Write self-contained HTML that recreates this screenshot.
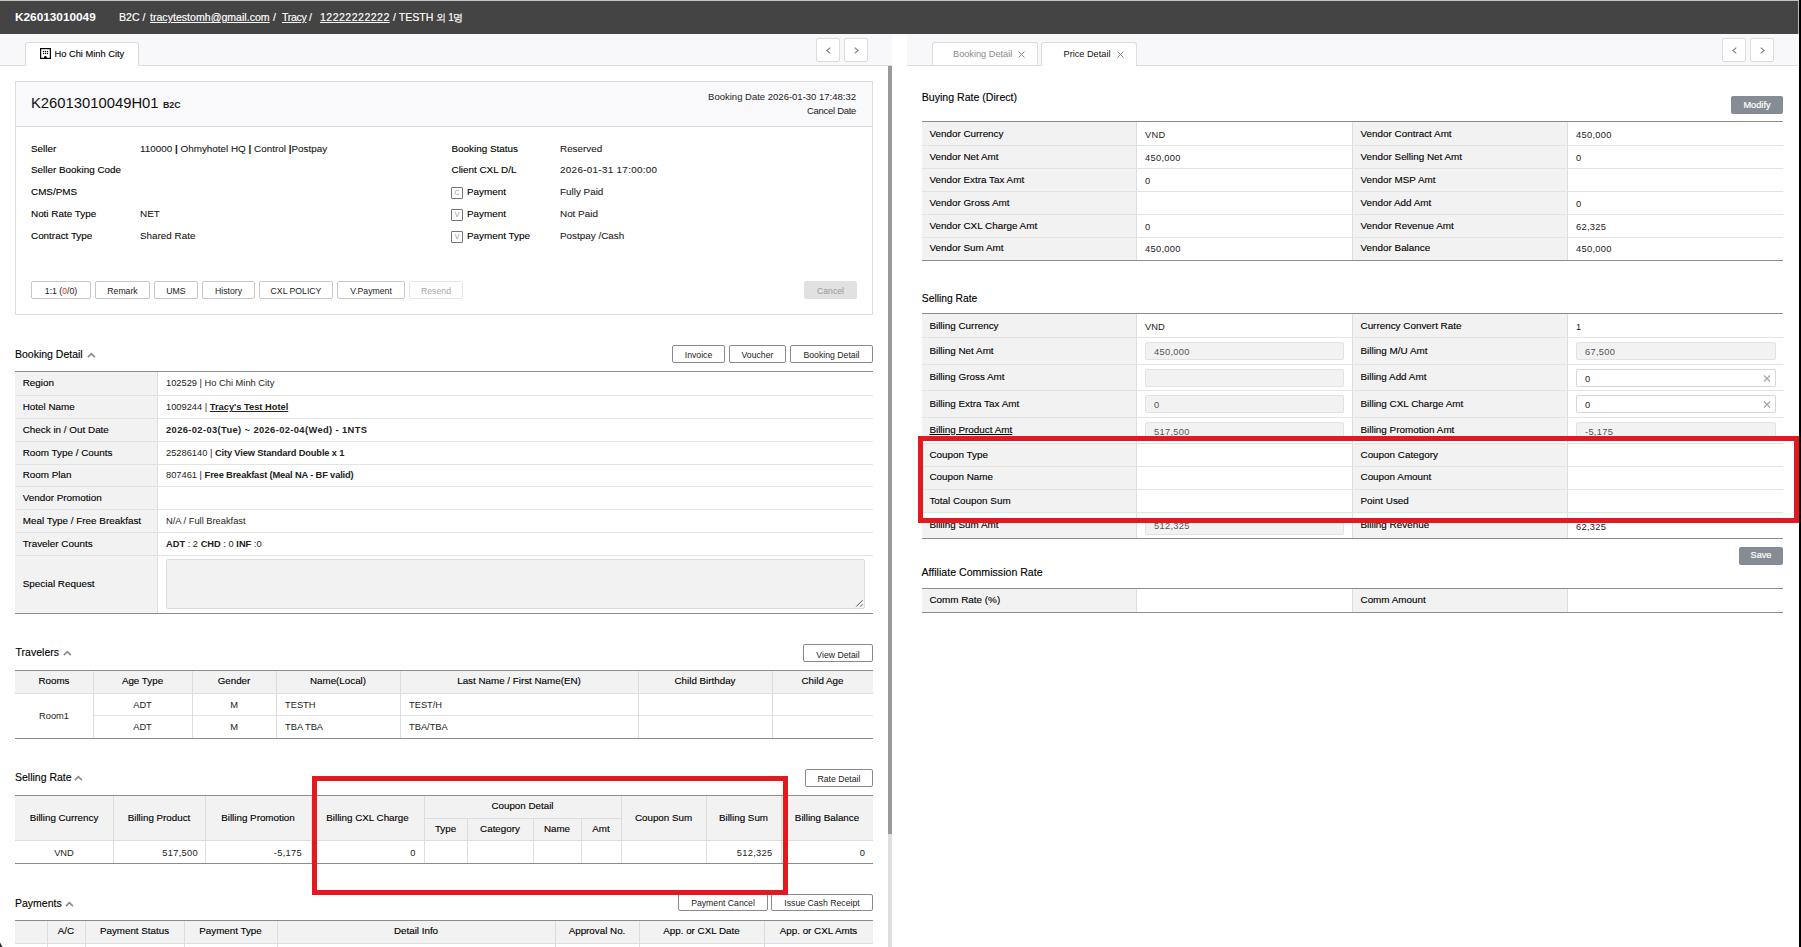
<!DOCTYPE html>
<html><head><meta charset="utf-8"><title>Booking</title>
<style>
html,body{margin:0;padding:0;}
body{width:1801px;height:947px;overflow:hidden;position:relative;background:#fff;font-family:"Liberation Sans",sans-serif;}
body>div,body>span{position:absolute;}
span{white-space:nowrap;}
</style></head><body>
<div style="left:0px;top:0px;width:1801px;height:947px;background:#fff"></div>
<div style="left:0px;top:0px;width:1798px;height:1px;background:#c4c4c4"></div>
<div style="left:0px;top:1px;width:1798px;height:33px;background:#444444"></div>
<span style="left:15px;top:12px;font-size:11.8px;line-height:11.8px;font-weight:700;color:#fff;">K26013010049</span>
<span style="left:119px;top:12px;font-size:10.6px;line-height:10.6px;color:#fff;-webkit-text-stroke:0.15px #fff;">B2C /</span>
<span style="left:150px;top:12px;font-size:10.6px;line-height:10.6px;color:#fff;-webkit-text-stroke:0.15px #fff;text-decoration:underline">tracytestomh@gmail.com</span>
<span style="left:273px;top:12px;font-size:10.6px;line-height:10.6px;color:#fff;-webkit-text-stroke:0.15px #fff;">/</span>
<span style="left:282px;top:12px;font-size:10.6px;line-height:10.6px;color:#fff;-webkit-text-stroke:0.15px #fff;text-decoration:underline;letter-spacing:-0.3px">Tracy</span>
<span style="left:309px;top:12px;font-size:10.6px;line-height:10.6px;color:#fff;-webkit-text-stroke:0.15px #fff;">/</span>
<span style="left:320px;top:12px;font-size:10.6px;line-height:10.6px;color:#fff;-webkit-text-stroke:0.15px #fff;text-decoration:underline;letter-spacing:0.45px">12222222222</span>
<span style="left:393px;top:12px;font-size:10.6px;line-height:10.6px;color:#fff;-webkit-text-stroke:0.15px #fff;">/ TESTH <span style='font-size:10px;letter-spacing:-0.5px'>외 1명</span></span>
<div style="left:1798px;top:0px;width:1px;height:34px;background:#bbbbbb"></div>
<div style="left:1799px;top:0px;width:2px;height:947px;background:#000"></div>
<svg style="position:absolute;left:0;top:942px" width="4" height="5" viewBox="0 0 4 5"><path d="M0 0.5 L2.6 5 L0 5 Z" fill="#333"/></svg>
<div style="left:0px;top:34px;width:892px;height:31px;background:#f8f7fa"></div>
<div style="left:0px;top:65px;width:892px;height:1px;background:#dcdcdc"></div>
<div style="left:25px;top:42px;width:114px;height:24px;background:#fff;border:1px solid #dcdcdc;border-bottom:none;border-radius:3px 3px 0 0;box-sizing:border-box"></div>
<svg style="position:absolute;left:40px;top:48px" width="11" height="11" viewBox="0 0 11 11"><rect x="0.6" y="0.6" width="9.8" height="9.8" fill="#fff" stroke="#000" stroke-width="1.2"/><g fill="#000"><circle cx="3.5" cy="3.5" r="0.7"/><circle cx="5.5" cy="3.5" r="0.7"/><circle cx="7.5" cy="3.5" r="0.7"/><circle cx="3.5" cy="5.5" r="0.7"/><circle cx="5.5" cy="5.5" r="0.7"/><circle cx="7.5" cy="5.5" r="0.7"/><path d="M4.1 10.5 V9.2 A1.3 1.3 0 0 1 6.7 9.2 V10.5 Z"/></g></svg>
<span style="left:54.5px;top:50px;font-size:9.3px;line-height:9.3px;color:#000;-webkit-text-stroke:0.1px #000;">Ho Chi Minh City</span>
<div style="left:816px;top:38px;width:24px;height:24px;background:#fff;border:1px solid #dcdcdc;border-radius:2px;box-sizing:border-box"></div>
<svg style="position:absolute;left:826px;top:46.5px" width="5" height="7" viewBox="0 0 5 7"><polyline points="4.3,0.6 0.8,3.5 4.3,6.4" fill="none" stroke="#7a7a7a" stroke-width="1.1"/></svg>
<div style="left:844px;top:38px;width:24px;height:24px;background:#fff;border:1px solid #dcdcdc;border-radius:2px;box-sizing:border-box"></div>
<svg style="position:absolute;left:854px;top:46.5px" width="5" height="7" viewBox="0 0 5 7"><polyline points="0.7,0.6 4.2,3.5 0.7,6.4" fill="none" stroke="#7a7a7a" stroke-width="1.1"/></svg>
<div style="left:888px;top:66px;width:4px;height:768px;background:#9a9a9a"></div>
<div style="left:888px;top:834px;width:4px;height:113px;background:#dedede"></div>
<div style="left:907px;top:34px;width:891px;height:31px;background:#f8f7fa"></div>
<div style="left:907px;top:65px;width:891px;height:1px;background:#dcdcdc"></div>
<div style="left:932px;top:42px;width:106px;height:24px;background:#fff;border:1px solid #dcdcdc;border-bottom:none;border-radius:3px 3px 0 0;box-sizing:border-box"></div>
<div style="left:932px;top:65px;width:106px;height:1px;background:#dcdcdc"></div>
<span style="left:953px;top:50px;font-size:9.2px;line-height:9.2px;color:#8a8a8a;">Booking Detail</span>
<svg style="position:absolute;left:1018px;top:51px" width="7" height="7" viewBox="0 0 7 7"><path d="M0.5 0.5 L6.5 6.5 M6.5 0.5 L0.5 6.5" stroke="#888" stroke-width="1"/></svg>
<div style="left:1041px;top:42px;width:96px;height:24px;background:#fff;border:1px solid #dcdcdc;border-bottom:none;border-radius:3px 3px 0 0;box-sizing:border-box"></div>
<span style="left:1063.5px;top:50px;font-size:9.2px;line-height:9.2px;color:#111;">Price Detail</span>
<svg style="position:absolute;left:1117px;top:51px" width="7" height="7" viewBox="0 0 7 7"><path d="M0.5 0.5 L6.5 6.5 M6.5 0.5 L0.5 6.5" stroke="#888" stroke-width="1"/></svg>
<div style="left:1722px;top:38px;width:24px;height:24px;background:#fff;border:1px solid #dcdcdc;border-radius:2px;box-sizing:border-box"></div>
<svg style="position:absolute;left:1732px;top:46.5px" width="5" height="7" viewBox="0 0 5 7"><polyline points="4.3,0.6 0.8,3.5 4.3,6.4" fill="none" stroke="#7a7a7a" stroke-width="1.1"/></svg>
<div style="left:1750px;top:38px;width:24px;height:24px;background:#fff;border:1px solid #dcdcdc;border-radius:2px;box-sizing:border-box"></div>
<svg style="position:absolute;left:1760px;top:46.5px" width="5" height="7" viewBox="0 0 5 7"><polyline points="0.7,0.6 4.2,3.5 0.7,6.4" fill="none" stroke="#7a7a7a" stroke-width="1.1"/></svg>
<div style="left:15px;top:81px;width:858px;height:234px;background:#fff;border:1px solid #dedede;box-sizing:border-box"></div>
<div style="left:16px;top:82px;width:856px;height:44px;background:#f9f8fa"></div>
<div style="left:16px;top:126px;width:856px;height:1px;background:#dedede"></div>
<span style="left:31px;top:96px;font-size:14.8px;line-height:14.8px;color:#111;">K26013010049H01</span>
<span style="left:163px;top:101px;font-size:8.8px;line-height:8.8px;font-weight:700;color:#222;">B2C</span>
<span style="left:256px;width:600px;text-align:right;top:92px;font-size:9.5px;line-height:9.5px;color:#222;">Booking Date 2026-01-30 17:48:32</span>
<span style="left:256px;width:600px;text-align:right;top:106px;font-size:9.5px;line-height:9.5px;color:#222;letter-spacing:-0.3px">Cancel Date</span>
<span style="left:31px;top:144px;font-size:9.9px;line-height:9.9px;color:#000;-webkit-text-stroke:0.12px #000;">Seller</span>
<span style="left:31px;top:165px;font-size:9.9px;line-height:9.9px;color:#000;-webkit-text-stroke:0.12px #000;">Seller Booking Code</span>
<span style="left:31px;top:187px;font-size:9.9px;line-height:9.9px;color:#000;-webkit-text-stroke:0.12px #000;">CMS/PMS</span>
<span style="left:31px;top:209px;font-size:9.9px;line-height:9.9px;color:#000;-webkit-text-stroke:0.12px #000;">Noti Rate Type</span>
<span style="left:31px;top:231px;font-size:9.9px;line-height:9.9px;color:#000;-webkit-text-stroke:0.12px #000;">Contract Type</span>
<span style="left:140px;top:144px;font-size:9.9px;line-height:9.9px;color:#141414;-webkit-text-stroke:0.08px #141414;">110000 <b>|</b> Ohmyhotel HQ <b>|</b> Control <b>|</b>Postpay</span>
<span style="left:140px;top:209px;font-size:9.9px;line-height:9.9px;color:#141414;-webkit-text-stroke:0.08px #141414;">NET</span>
<span style="left:140px;top:231px;font-size:9.9px;line-height:9.9px;color:#141414;-webkit-text-stroke:0.08px #141414;">Shared Rate</span>
<span style="left:451.5px;top:144px;font-size:9.9px;line-height:9.9px;color:#000;-webkit-text-stroke:0.12px #000;">Booking Status</span>
<span style="left:451.5px;top:165px;font-size:9.9px;line-height:9.9px;color:#000;-webkit-text-stroke:0.12px #000;">Client CXL D/L</span>
<div style="left:451px;top:187px;width:12px;height:12px;background:#fff;border:1px solid #777;border-radius:1px;box-sizing:border-box"></div>
<span style="left:157px;width:600px;text-align:center;top:189px;font-size:7px;line-height:7px;color:#999;">C</span>
<span style="left:467px;top:187px;font-size:9.9px;line-height:9.9px;color:#000;-webkit-text-stroke:0.12px #000;">Payment</span>
<div style="left:451px;top:209px;width:12px;height:12px;background:#fff;border:1px solid #777;border-radius:1px;box-sizing:border-box"></div>
<span style="left:157px;width:600px;text-align:center;top:211px;font-size:7px;line-height:7px;color:#999;">V</span>
<span style="left:467px;top:209px;font-size:9.9px;line-height:9.9px;color:#000;-webkit-text-stroke:0.12px #000;">Payment</span>
<div style="left:451px;top:231px;width:12px;height:12px;background:#fff;border:1px solid #777;border-radius:1px;box-sizing:border-box"></div>
<span style="left:157px;width:600px;text-align:center;top:233px;font-size:7px;line-height:7px;color:#999;">V</span>
<span style="left:467px;top:231px;font-size:9.9px;line-height:9.9px;color:#000;-webkit-text-stroke:0.12px #000;">Payment Type</span>
<span style="left:560px;top:144px;font-size:9.9px;line-height:9.9px;color:#1e1e1e;-webkit-text-stroke:0.1px #1e1e1e;">Reserved</span>
<span style="left:560px;top:165px;font-size:9.9px;line-height:9.9px;color:#1e1e1e;-webkit-text-stroke:0.1px #1e1e1e;letter-spacing:0.3px;">2026-01-31 17:00:00</span>
<span style="left:560px;top:187px;font-size:9.9px;line-height:9.9px;color:#1e1e1e;-webkit-text-stroke:0.1px #1e1e1e;">Fully Paid</span>
<span style="left:560px;top:209px;font-size:9.9px;line-height:9.9px;color:#1e1e1e;-webkit-text-stroke:0.1px #1e1e1e;">Not Paid</span>
<span style="left:560px;top:231px;font-size:9.9px;line-height:9.9px;color:#1e1e1e;-webkit-text-stroke:0.1px #1e1e1e;">Postpay /Cash</span>
<div style="left:31px;top:281px;width:60px;height:18px;background:#fff;border:1px solid #c8c8c8;border-radius:2px;box-sizing:border-box"></div>
<span style="left:-239.0px;width:600px;text-align:center;top:287px;font-size:8.7px;line-height:8.7px;color:#222;">1:1 (<span style="color:#e33">0</span>/0)</span>
<div style="left:95px;top:281px;width:55px;height:18px;background:#fff;border:1px solid #c8c8c8;border-radius:2px;box-sizing:border-box"></div>
<span style="left:-177.5px;width:600px;text-align:center;top:287px;font-size:8.7px;line-height:8.7px;color:#222;">Remark</span>
<div style="left:154px;top:281px;width:44px;height:18px;background:#fff;border:1px solid #c8c8c8;border-radius:2px;box-sizing:border-box"></div>
<span style="left:-124.0px;width:600px;text-align:center;top:287px;font-size:8.7px;line-height:8.7px;color:#222;">UMS</span>
<div style="left:202px;top:281px;width:53px;height:18px;background:#fff;border:1px solid #c8c8c8;border-radius:2px;box-sizing:border-box"></div>
<span style="left:-71.5px;width:600px;text-align:center;top:287px;font-size:8.7px;line-height:8.7px;color:#222;">History</span>
<div style="left:259px;top:281px;width:74px;height:18px;background:#fff;border:1px solid #c8c8c8;border-radius:2px;box-sizing:border-box"></div>
<span style="left:-4.0px;width:600px;text-align:center;top:287px;font-size:8.7px;line-height:8.7px;color:#222;">CXL POLICY</span>
<div style="left:337px;top:281px;width:68px;height:18px;background:#fff;border:1px solid #c8c8c8;border-radius:2px;box-sizing:border-box"></div>
<span style="left:71.0px;width:600px;text-align:center;top:287px;font-size:8.7px;line-height:8.7px;color:#222;">V.Payment</span>
<div style="left:409px;top:281px;width:54px;height:18px;background:#fff;border:1px solid #e6e6e6;border-radius:2px;box-sizing:border-box"></div>
<span style="left:136.0px;width:600px;text-align:center;top:287px;font-size:8.7px;line-height:8.7px;color:#a5a5a5;">Resend</span>
<div style="left:804px;top:281px;width:53px;height:18px;background:#e1e1e1;border-radius:2px"></div>
<span style="left:530.5px;width:600px;text-align:center;top:287px;font-size:8.7px;line-height:8.7px;color:#9a9a9a;">Cancel</span>
<span style="left:15px;top:349px;font-size:10.5px;line-height:10.5px;color:#000;-webkit-text-stroke:0.12px #000;">Booking Detail</span>
<svg style="position:absolute;left:86.5px;top:351.5px" width="9" height="6" viewBox="0 0 9 6"><polyline points="0.9,5.1 4.4,1.6 7.9,5.1" fill="none" stroke="#8a8a8a" stroke-width="1.6"/></svg>
<div style="left:672px;top:345px;width:53px;height:18px;background:#fff;border:1px solid #8a8a8a;border-radius:2px;box-sizing:border-box"></div>
<span style="left:398.5px;width:600px;text-align:center;top:351px;font-size:8.7px;line-height:8.7px;color:#222;">Invoice</span>
<div style="left:729px;top:345px;width:57px;height:18px;background:#fff;border:1px solid #8a8a8a;border-radius:2px;box-sizing:border-box"></div>
<span style="left:457.5px;width:600px;text-align:center;top:351px;font-size:8.7px;line-height:8.7px;color:#222;">Voucher</span>
<div style="left:790px;top:345px;width:83px;height:18px;background:#fff;border:1px solid #8a8a8a;border-radius:2px;box-sizing:border-box"></div>
<span style="left:531.5px;width:600px;text-align:center;top:351px;font-size:8.7px;line-height:8.7px;color:#222;">Booking Detail</span>
<div style="left:15px;top:372px;width:142px;height:241px;background:#f2f2f2"></div>
<div style="left:157px;top:372px;width:1px;height:241px;background:#dddddd"></div>
<div style="left:15px;top:395px;width:858px;height:1px;background:#e3e3e3"></div>
<div style="left:15px;top:418px;width:858px;height:1px;background:#e3e3e3"></div>
<div style="left:15px;top:441px;width:858px;height:1px;background:#e3e3e3"></div>
<div style="left:15px;top:464px;width:858px;height:1px;background:#e3e3e3"></div>
<div style="left:15px;top:486px;width:858px;height:1px;background:#e3e3e3"></div>
<div style="left:15px;top:509px;width:858px;height:1px;background:#e3e3e3"></div>
<div style="left:15px;top:532px;width:858px;height:1px;background:#e3e3e3"></div>
<div style="left:15px;top:555px;width:858px;height:1px;background:#e3e3e3"></div>
<div style="left:15px;top:371px;width:858px;height:1px;background:#8c8c8c"></div>
<div style="left:15px;top:613px;width:858px;height:1px;background:#8c8c8c"></div>
<span style="left:22.7px;top:378px;font-size:9.9px;line-height:9.9px;color:#000;-webkit-text-stroke:0.12px #000;">Region</span>
<span style="left:22.7px;top:402px;font-size:9.9px;line-height:9.9px;color:#000;-webkit-text-stroke:0.12px #000;">Hotel Name</span>
<span style="left:22.7px;top:425px;font-size:9.9px;line-height:9.9px;color:#000;-webkit-text-stroke:0.12px #000;">Check in / Out Date</span>
<span style="left:22.7px;top:448px;font-size:9.9px;line-height:9.9px;color:#000;-webkit-text-stroke:0.12px #000;">Room Type / Counts</span>
<span style="left:22.7px;top:470px;font-size:9.9px;line-height:9.9px;color:#000;-webkit-text-stroke:0.12px #000;">Room Plan</span>
<span style="left:22.7px;top:493px;font-size:9.9px;line-height:9.9px;color:#000;-webkit-text-stroke:0.12px #000;">Vendor Promotion</span>
<span style="left:22.7px;top:516px;font-size:9.9px;line-height:9.9px;color:#000;-webkit-text-stroke:0.12px #000;">Meal Type / Free Breakfast</span>
<span style="left:22.7px;top:539px;font-size:9.9px;line-height:9.9px;color:#000;-webkit-text-stroke:0.12px #000;">Traveler Counts</span>
<span style="left:22.7px;top:579px;font-size:9.9px;line-height:9.9px;color:#000;-webkit-text-stroke:0.12px #000;">Special Request</span>
<span style="left:166px;top:379px;font-size:9.3px;line-height:9.3px;color:#222;">102529 | Ho Chi Minh City</span>
<span style="left:166px;top:403px;font-size:9.3px;line-height:9.3px;color:#222;">1009244 | <b style="text-decoration:underline">Tracy's Test Hotel</b></span>
<span style="left:166px;top:426px;font-size:9.3px;line-height:9.3px;color:#222;"><b style="letter-spacing:0.4px">2026-02-03(Tue) ~ 2026-02-04(Wed) - 1NTS</b></span>
<span style="left:166px;top:449px;font-size:9.3px;line-height:9.3px;color:#222;">25286140 | <b style="letter-spacing:-0.15px">City View Standard Double x 1</b></span>
<span style="left:166px;top:471px;font-size:9.3px;line-height:9.3px;color:#222;">807461 | <b style="letter-spacing:-0.15px">Free Breakfast (Meal NA - BF valid)</b></span>
<span style="left:166px;top:517px;font-size:9.3px;line-height:9.3px;color:#222;">N/A / Full Breakfast</span>
<span style="left:166px;top:540px;font-size:9.3px;line-height:9.3px;color:#222;"><b>ADT</b> : 2 <b>CHD</b> : 0 <b>INF</b> :0</span>
<div style="left:166px;top:559px;width:699px;height:50px;background:#f2f2f2;border:1px solid #dcdcdc;border-radius:2px;box-sizing:border-box"></div>
<svg style="position:absolute;left:855px;top:599px" width="9" height="9" viewBox="0 0 9 9"><path d="M1.2 7.6 L7.6 1.2 M5.2 7.6 L7.6 5.2" stroke="#555" stroke-width="1"/></svg>
<span style="left:15.6px;top:647px;font-size:10.5px;line-height:10.5px;color:#000;-webkit-text-stroke:0.12px #000;">Travelers</span>
<svg style="position:absolute;left:63px;top:649.5px" width="9" height="6" viewBox="0 0 9 6"><polyline points="0.9,5.1 4.4,1.6 7.9,5.1" fill="none" stroke="#8a8a8a" stroke-width="1.6"/></svg>
<div style="left:803px;top:644px;width:70px;height:18px;background:#fff;border:1px solid #8a8a8a;border-radius:2px;box-sizing:border-box"></div>
<span style="left:538.0px;width:600px;text-align:center;top:651px;font-size:8.7px;line-height:8.7px;color:#222;">View Detail</span>
<div style="left:15px;top:671px;width:858px;height:22px;background:#f2f2f2"></div>
<div style="left:15px;top:670px;width:858px;height:1px;background:#8c8c8c"></div>
<div style="left:15px;top:693px;width:858px;height:1px;background:#dddddd"></div>
<div style="left:93px;top:715px;width:780px;height:1px;background:#e3e3e3"></div>
<div style="left:15px;top:738px;width:858px;height:1px;background:#8c8c8c"></div>
<div style="left:93px;top:671px;width:1px;height:67px;background:#dddddd"></div>
<div style="left:192px;top:671px;width:1px;height:67px;background:#dddddd"></div>
<div style="left:276px;top:671px;width:1px;height:67px;background:#dddddd"></div>
<div style="left:400px;top:671px;width:1px;height:67px;background:#dddddd"></div>
<div style="left:638px;top:671px;width:1px;height:67px;background:#dddddd"></div>
<div style="left:772px;top:671px;width:1px;height:67px;background:#dddddd"></div>
<span style="left:-246.0px;width:600px;text-align:center;top:676px;font-size:9.8px;line-height:9.8px;color:#000;-webkit-text-stroke:0.12px #000;">Rooms</span>
<span style="left:-157.5px;width:600px;text-align:center;top:676px;font-size:9.8px;line-height:9.8px;color:#000;-webkit-text-stroke:0.12px #000;">Age Type</span>
<span style="left:-66.0px;width:600px;text-align:center;top:676px;font-size:9.8px;line-height:9.8px;color:#000;-webkit-text-stroke:0.12px #000;">Gender</span>
<span style="left:38.0px;width:600px;text-align:center;top:676px;font-size:9.8px;line-height:9.8px;color:#000;-webkit-text-stroke:0.12px #000;">Name(Local)</span>
<span style="left:219.0px;width:600px;text-align:center;top:676px;font-size:9.8px;line-height:9.8px;color:#000;-webkit-text-stroke:0.12px #000;">Last Name / First Name(EN)</span>
<span style="left:405.0px;width:600px;text-align:center;top:676px;font-size:9.8px;line-height:9.8px;color:#000;-webkit-text-stroke:0.12px #000;">Child Birthday</span>
<span style="left:522.5px;width:600px;text-align:center;top:676px;font-size:9.8px;line-height:9.8px;color:#000;-webkit-text-stroke:0.12px #000;">Child Age</span>
<span style="left:-246px;width:600px;text-align:center;top:712px;font-size:9.3px;line-height:9.3px;color:#222;">Room1</span>
<span style="left:-157.5px;width:600px;text-align:center;top:701px;font-size:9.3px;line-height:9.3px;color:#222;">ADT</span>
<span style="left:-66px;width:600px;text-align:center;top:701px;font-size:9.3px;line-height:9.3px;color:#222;">M</span>
<span style="left:285px;top:701px;font-size:9.3px;line-height:9.3px;color:#222;">TESTH</span>
<span style="left:409px;top:701px;font-size:9.3px;line-height:9.3px;color:#222;">TEST/H</span>
<span style="left:-157.5px;width:600px;text-align:center;top:723px;font-size:9.3px;line-height:9.3px;color:#222;">ADT</span>
<span style="left:-66px;width:600px;text-align:center;top:723px;font-size:9.3px;line-height:9.3px;color:#222;">M</span>
<span style="left:285px;top:723px;font-size:9.3px;line-height:9.3px;color:#222;">TBA TBA</span>
<span style="left:409px;top:723px;font-size:9.3px;line-height:9.3px;color:#222;">TBA/TBA</span>
<span style="left:15px;top:772px;font-size:10.5px;line-height:10.5px;color:#000;-webkit-text-stroke:0.12px #000;">Selling Rate</span>
<svg style="position:absolute;left:73.5px;top:774.5px" width="9" height="6" viewBox="0 0 9 6"><polyline points="0.9,5.1 4.4,1.6 7.9,5.1" fill="none" stroke="#8a8a8a" stroke-width="1.6"/></svg>
<div style="left:805px;top:769px;width:68px;height:18px;background:#fff;border:1px solid #8a8a8a;border-radius:2px;box-sizing:border-box"></div>
<span style="left:539.0px;width:600px;text-align:center;top:775px;font-size:8.7px;line-height:8.7px;color:#222;">Rate Detail</span>
<div style="left:15px;top:796px;width:858px;height:44px;background:#f2f2f2"></div>
<div style="left:15px;top:795px;width:858px;height:1px;background:#8c8c8c"></div>
<div style="left:15px;top:840px;width:858px;height:1px;background:#dddddd"></div>
<div style="left:424px;top:818px;width:197px;height:1px;background:#dddddd"></div>
<div style="left:15px;top:863px;width:858px;height:1px;background:#8c8c8c"></div>
<div style="left:113px;top:796px;width:1px;height:67px;background:#dddddd"></div>
<div style="left:205px;top:796px;width:1px;height:67px;background:#dddddd"></div>
<div style="left:311px;top:796px;width:1px;height:67px;background:#dddddd"></div>
<div style="left:424px;top:796px;width:1px;height:67px;background:#dddddd"></div>
<div style="left:621px;top:796px;width:1px;height:67px;background:#dddddd"></div>
<div style="left:706px;top:796px;width:1px;height:67px;background:#dddddd"></div>
<div style="left:781px;top:796px;width:1px;height:67px;background:#dddddd"></div>
<div style="left:467px;top:818px;width:1px;height:45px;background:#dddddd"></div>
<div style="left:533px;top:818px;width:1px;height:45px;background:#dddddd"></div>
<div style="left:581px;top:818px;width:1px;height:45px;background:#dddddd"></div>
<span style="left:-236.0px;width:600px;text-align:center;top:813px;font-size:9.8px;line-height:9.8px;color:#000;-webkit-text-stroke:0.12px #000;">Billing Currency</span>
<span style="left:-141.0px;width:600px;text-align:center;top:813px;font-size:9.8px;line-height:9.8px;color:#000;-webkit-text-stroke:0.12px #000;">Billing Product</span>
<span style="left:-42.0px;width:600px;text-align:center;top:813px;font-size:9.8px;line-height:9.8px;color:#000;-webkit-text-stroke:0.12px #000;">Billing Promotion</span>
<span style="left:67.5px;width:600px;text-align:center;top:813px;font-size:9.8px;line-height:9.8px;color:#000;-webkit-text-stroke:0.12px #000;">Billing CXL Charge</span>
<span style="left:222.5px;width:600px;text-align:center;top:801px;font-size:9.8px;line-height:9.8px;color:#000;-webkit-text-stroke:0.12px #000;">Coupon Detail</span>
<span style="left:145.5px;width:600px;text-align:center;top:824px;font-size:9.8px;line-height:9.8px;color:#000;-webkit-text-stroke:0.12px #000;">Type</span>
<span style="left:200.0px;width:600px;text-align:center;top:824px;font-size:9.8px;line-height:9.8px;color:#000;-webkit-text-stroke:0.12px #000;">Category</span>
<span style="left:257.0px;width:600px;text-align:center;top:824px;font-size:9.8px;line-height:9.8px;color:#000;-webkit-text-stroke:0.12px #000;">Name</span>
<span style="left:301.0px;width:600px;text-align:center;top:824px;font-size:9.8px;line-height:9.8px;color:#000;-webkit-text-stroke:0.12px #000;">Amt</span>
<span style="left:363.5px;width:600px;text-align:center;top:813px;font-size:9.8px;line-height:9.8px;color:#000;-webkit-text-stroke:0.12px #000;">Coupon Sum</span>
<span style="left:443.5px;width:600px;text-align:center;top:813px;font-size:9.8px;line-height:9.8px;color:#000;-webkit-text-stroke:0.12px #000;">Billing Sum</span>
<span style="left:527.0px;width:600px;text-align:center;top:813px;font-size:9.8px;line-height:9.8px;color:#000;-webkit-text-stroke:0.12px #000;">Billing Balance</span>
<span style="left:-236px;width:600px;text-align:center;top:849px;font-size:9.3px;line-height:9.3px;color:#222;">VND</span>
<span style="left:-402px;width:600px;text-align:right;top:849px;font-size:9.3px;line-height:9.3px;color:#222;letter-spacing:0.3px;">517,500</span>
<span style="left:-298px;width:600px;text-align:right;top:849px;font-size:9.3px;line-height:9.3px;color:#222;letter-spacing:0.3px;">-5,175</span>
<span style="left:-184.5px;width:600px;text-align:right;top:849px;font-size:9.3px;line-height:9.3px;color:#222;">0</span>
<span style="left:172.5px;width:600px;text-align:right;top:849px;font-size:9.3px;line-height:9.3px;color:#222;letter-spacing:0.3px;">512,325</span>
<span style="left:265px;width:600px;text-align:right;top:849px;font-size:9.3px;line-height:9.3px;color:#222;">0</span>
<span style="left:15px;top:898px;font-size:10.5px;line-height:10.5px;color:#000;-webkit-text-stroke:0.12px #000;">Payments</span>
<svg style="position:absolute;left:65px;top:900.5px" width="9" height="6" viewBox="0 0 9 6"><polyline points="0.9,5.1 4.4,1.6 7.9,5.1" fill="none" stroke="#8a8a8a" stroke-width="1.6"/></svg>
<div style="left:678px;top:894px;width:90px;height:17px;background:#fff;border:1px solid #8a8a8a;border-radius:2px;box-sizing:border-box"></div>
<span style="left:423.0px;width:600px;text-align:center;top:899px;font-size:8.7px;line-height:8.7px;color:#222;">Payment Cancel</span>
<div style="left:771px;top:894px;width:102px;height:17px;background:#fff;border:1px solid #8a8a8a;border-radius:2px;box-sizing:border-box"></div>
<span style="left:522.0px;width:600px;text-align:center;top:899px;font-size:8.7px;line-height:8.7px;color:#222;">Issue Cash Receipt</span>
<div style="left:15px;top:921px;width:858px;height:22px;background:#f2f2f2"></div>
<div style="left:15px;top:920px;width:858px;height:1px;background:#8c8c8c"></div>
<div style="left:15px;top:943px;width:858px;height:1px;background:#dddddd"></div>
<div style="left:47px;top:921px;width:1px;height:26px;background:#dddddd"></div>
<div style="left:85px;top:921px;width:1px;height:26px;background:#dddddd"></div>
<div style="left:184px;top:921px;width:1px;height:26px;background:#dddddd"></div>
<div style="left:277px;top:921px;width:1px;height:26px;background:#dddddd"></div>
<div style="left:555px;top:921px;width:1px;height:26px;background:#dddddd"></div>
<div style="left:639px;top:921px;width:1px;height:26px;background:#dddddd"></div>
<div style="left:764px;top:921px;width:1px;height:26px;background:#dddddd"></div>
<span style="left:-234.0px;width:600px;text-align:center;top:926px;font-size:9.8px;line-height:9.8px;color:#000;-webkit-text-stroke:0.12px #000;">A/C</span>
<span style="left:-165.5px;width:600px;text-align:center;top:926px;font-size:9.8px;line-height:9.8px;color:#000;-webkit-text-stroke:0.12px #000;">Payment Status</span>
<span style="left:-69.5px;width:600px;text-align:center;top:926px;font-size:9.8px;line-height:9.8px;color:#000;-webkit-text-stroke:0.12px #000;">Payment Type</span>
<span style="left:116.0px;width:600px;text-align:center;top:926px;font-size:9.8px;line-height:9.8px;color:#000;-webkit-text-stroke:0.12px #000;">Detail Info</span>
<span style="left:297.0px;width:600px;text-align:center;top:926px;font-size:9.8px;line-height:9.8px;color:#000;-webkit-text-stroke:0.12px #000;">Approval No.</span>
<span style="left:401.5px;width:600px;text-align:center;top:926px;font-size:9.8px;line-height:9.8px;color:#000;-webkit-text-stroke:0.12px #000;">App. or CXL Date</span>
<span style="left:518.5px;width:600px;text-align:center;top:926px;font-size:9.8px;line-height:9.8px;color:#000;-webkit-text-stroke:0.12px #000;">App. or CXL Amts</span>
<div style="left:312px;top:776px;width:476px;height:119px;border:5px solid #e3191f;box-sizing:border-box"></div>
<span style="left:921.7px;top:92px;font-size:10.6px;line-height:10.6px;color:#000;-webkit-text-stroke:0.12px #000;">Buying Rate (Direct)</span>
<div style="left:1731px;top:96px;width:52px;height:18px;background:#868c93;border-radius:2px"></div>
<span style="left:1457px;width:600px;text-align:center;top:101px;font-size:9.2px;line-height:9.2px;color:#fff;-webkit-text-stroke:0.2px #fff;">Modify</span>
<div style="left:922px;top:122px;width:214px;height:138px;background:#f2f2f2"></div>
<div style="left:1352px;top:122px;width:215px;height:138px;background:#f2f2f2"></div>
<div style="left:1136px;top:122px;width:1px;height:138px;background:#dddddd"></div>
<div style="left:1352px;top:122px;width:1px;height:138px;background:#dddddd"></div>
<div style="left:1567px;top:122px;width:1px;height:138px;background:#dddddd"></div>
<div style="left:922px;top:145px;width:861px;height:1px;background:#e3e3e3"></div>
<div style="left:922px;top:168px;width:861px;height:1px;background:#e3e3e3"></div>
<div style="left:922px;top:191px;width:861px;height:1px;background:#e3e3e3"></div>
<div style="left:922px;top:214px;width:861px;height:1px;background:#e3e3e3"></div>
<div style="left:922px;top:237px;width:861px;height:1px;background:#e3e3e3"></div>
<div style="left:922px;top:121px;width:861px;height:1px;background:#8c8c8c"></div>
<div style="left:922px;top:260px;width:861px;height:1px;background:#8c8c8c"></div>
<span style="left:929.4px;top:129px;font-size:9.9px;line-height:9.9px;color:#000;-webkit-text-stroke:0.12px #000;">Vendor Currency</span>
<span style="left:1360.5px;top:129px;font-size:9.9px;line-height:9.9px;color:#000;-webkit-text-stroke:0.12px #000;">Vendor Contract Amt</span>
<span style="left:1145px;top:131px;font-size:9.3px;line-height:9.3px;color:#222;letter-spacing:0.3px;">VND</span>
<span style="left:1576px;top:131px;font-size:9.3px;line-height:9.3px;color:#222;letter-spacing:0.3px;">450,000</span>
<span style="left:929.4px;top:152px;font-size:9.9px;line-height:9.9px;color:#000;-webkit-text-stroke:0.12px #000;">Vendor Net Amt</span>
<span style="left:1360.5px;top:152px;font-size:9.9px;line-height:9.9px;color:#000;-webkit-text-stroke:0.12px #000;">Vendor Selling Net Amt</span>
<span style="left:1145px;top:154px;font-size:9.3px;line-height:9.3px;color:#222;letter-spacing:0.3px;">450,000</span>
<span style="left:1576px;top:154px;font-size:9.3px;line-height:9.3px;color:#222;letter-spacing:0.3px;">0</span>
<span style="left:929.4px;top:175px;font-size:9.9px;line-height:9.9px;color:#000;-webkit-text-stroke:0.12px #000;">Vendor Extra Tax Amt</span>
<span style="left:1360.5px;top:175px;font-size:9.9px;line-height:9.9px;color:#000;-webkit-text-stroke:0.12px #000;">Vendor MSP Amt</span>
<span style="left:1145px;top:177px;font-size:9.3px;line-height:9.3px;color:#222;letter-spacing:0.3px;">0</span>
<span style="left:1576px;top:177px;font-size:9.3px;line-height:9.3px;color:#222;letter-spacing:0.3px;"></span>
<span style="left:929.4px;top:198px;font-size:9.9px;line-height:9.9px;color:#000;-webkit-text-stroke:0.12px #000;">Vendor Gross Amt</span>
<span style="left:1360.5px;top:198px;font-size:9.9px;line-height:9.9px;color:#000;-webkit-text-stroke:0.12px #000;">Vendor Add Amt</span>
<span style="left:1145px;top:200px;font-size:9.3px;line-height:9.3px;color:#222;letter-spacing:0.3px;"></span>
<span style="left:1576px;top:200px;font-size:9.3px;line-height:9.3px;color:#222;letter-spacing:0.3px;">0</span>
<span style="left:929.4px;top:221px;font-size:9.9px;line-height:9.9px;color:#000;-webkit-text-stroke:0.12px #000;">Vendor CXL Charge Amt</span>
<span style="left:1360.5px;top:221px;font-size:9.9px;line-height:9.9px;color:#000;-webkit-text-stroke:0.12px #000;">Vendor Revenue Amt</span>
<span style="left:1145px;top:223px;font-size:9.3px;line-height:9.3px;color:#222;letter-spacing:0.3px;">0</span>
<span style="left:1576px;top:223px;font-size:9.3px;line-height:9.3px;color:#222;letter-spacing:0.3px;">62,325</span>
<span style="left:929.4px;top:243px;font-size:9.9px;line-height:9.9px;color:#000;-webkit-text-stroke:0.12px #000;">Vendor Sum Amt</span>
<span style="left:1360.5px;top:243px;font-size:9.9px;line-height:9.9px;color:#000;-webkit-text-stroke:0.12px #000;">Vendor Balance</span>
<span style="left:1145px;top:245px;font-size:9.3px;line-height:9.3px;color:#222;letter-spacing:0.3px;">450,000</span>
<span style="left:1576px;top:245px;font-size:9.3px;line-height:9.3px;color:#222;letter-spacing:0.3px;">450,000</span>
<span style="left:921.8px;top:294px;font-size:10.3px;line-height:10.3px;color:#000;-webkit-text-stroke:0.12px #000;">Selling Rate</span>
<div style="left:922px;top:314px;width:214px;height:224px;background:#f2f2f2"></div>
<div style="left:1352px;top:314px;width:215px;height:224px;background:#f2f2f2"></div>
<div style="left:1136px;top:314px;width:1px;height:224px;background:#dddddd"></div>
<div style="left:1352px;top:314px;width:1px;height:224px;background:#dddddd"></div>
<div style="left:1567px;top:314px;width:1px;height:224px;background:#dddddd"></div>
<div style="left:922px;top:337px;width:861px;height:1px;background:#e3e3e3"></div>
<div style="left:922px;top:364px;width:861px;height:1px;background:#e3e3e3"></div>
<div style="left:922px;top:390px;width:861px;height:1px;background:#e3e3e3"></div>
<div style="left:922px;top:417px;width:861px;height:1px;background:#e3e3e3"></div>
<div style="left:922px;top:512px;width:861px;height:1px;background:#e3e3e3"></div>
<div style="left:922px;top:313px;width:861px;height:1px;background:#8c8c8c"></div>
<div style="left:922px;top:538px;width:861px;height:1px;background:#8c8c8c"></div>
<span style="left:929.4px;top:321px;font-size:9.9px;line-height:9.9px;color:#000;-webkit-text-stroke:0.12px #000;">Billing Currency</span>
<span style="left:1360.5px;top:321px;font-size:9.9px;line-height:9.9px;color:#000;-webkit-text-stroke:0.12px #000;">Currency Convert Rate</span>
<span style="left:929.4px;top:346px;font-size:9.9px;line-height:9.9px;color:#000;-webkit-text-stroke:0.12px #000;">Billing Net Amt</span>
<span style="left:1360.5px;top:346px;font-size:9.9px;line-height:9.9px;color:#000;-webkit-text-stroke:0.12px #000;">Billing M/U Amt</span>
<span style="left:929.4px;top:372px;font-size:9.9px;line-height:9.9px;color:#000;-webkit-text-stroke:0.12px #000;">Billing Gross Amt</span>
<span style="left:1360.5px;top:372px;font-size:9.9px;line-height:9.9px;color:#000;-webkit-text-stroke:0.12px #000;">Billing Add Amt</span>
<span style="left:929.4px;top:399px;font-size:9.9px;line-height:9.9px;color:#000;-webkit-text-stroke:0.12px #000;">Billing Extra Tax Amt</span>
<span style="left:1360.5px;top:399px;font-size:9.9px;line-height:9.9px;color:#000;-webkit-text-stroke:0.12px #000;">Billing CXL Charge Amt</span>
<span style="left:929.4px;top:425px;font-size:9.9px;line-height:9.9px;color:#000;-webkit-text-stroke:0.12px #000;"><u>Billing Product Amt</u></span>
<span style="left:1360.5px;top:425px;font-size:9.9px;line-height:9.9px;color:#000;-webkit-text-stroke:0.12px #000;">Billing Promotion Amt</span>
<span style="left:1145px;top:323px;font-size:9.3px;line-height:9.3px;color:#222;">VND</span>
<span style="left:1576px;top:323px;font-size:9.3px;line-height:9.3px;color:#222;">1</span>
<div style="left:1145px;top:342px;width:199px;height:18px;background:#f2f2f2;border:1px solid #e2e2e2;border-radius:2px;box-sizing:border-box"></div>
<span style="left:1154px;top:348px;font-size:9.3px;line-height:9.3px;color:#555;letter-spacing:0.3px;">450,000</span>
<div style="left:1576px;top:342px;width:200px;height:18px;background:#f2f2f2;border:1px solid #e2e2e2;border-radius:2px;box-sizing:border-box"></div>
<span style="left:1585px;top:348px;font-size:9.3px;line-height:9.3px;color:#555;letter-spacing:0.3px;">67,500</span>
<div style="left:1145px;top:369px;width:199px;height:18px;background:#f2f2f2;border:1px solid #e2e2e2;border-radius:2px;box-sizing:border-box"></div>
<div style="left:1576px;top:369px;width:200px;height:18px;background:#fff;border:1px solid #d6d6d6;border-radius:2px;box-sizing:border-box"></div>
<span style="left:1585px;top:375px;font-size:9.3px;line-height:9.3px;color:#222;letter-spacing:0.3px;">0</span>
<svg style="position:absolute;left:1763px;top:374.5px" width="8" height="7" viewBox="0 0 8 7"><path d="M1 0.5 L7 6.5 M7 0.5 L1 6.5" stroke="#a8a8a8" stroke-width="1.3"/></svg>
<div style="left:1145px;top:395px;width:199px;height:18px;background:#f2f2f2;border:1px solid #e2e2e2;border-radius:2px;box-sizing:border-box"></div>
<span style="left:1154px;top:401px;font-size:9.3px;line-height:9.3px;color:#555;letter-spacing:0.3px;">0</span>
<div style="left:1576px;top:395px;width:200px;height:18px;background:#fff;border:1px solid #d6d6d6;border-radius:2px;box-sizing:border-box"></div>
<span style="left:1585px;top:401px;font-size:9.3px;line-height:9.3px;color:#222;letter-spacing:0.3px;">0</span>
<svg style="position:absolute;left:1763px;top:400.5px" width="8" height="7" viewBox="0 0 8 7"><path d="M1 0.5 L7 6.5 M7 0.5 L1 6.5" stroke="#a8a8a8" stroke-width="1.3"/></svg>
<div style="left:1145px;top:422px;width:199px;height:18px;background:#f2f2f2;border:1px solid #e2e2e2;border-radius:2px;box-sizing:border-box"></div>
<span style="left:1154px;top:428px;font-size:9.3px;line-height:9.3px;color:#555;letter-spacing:0.3px;">517,500</span>
<div style="left:1576px;top:422px;width:200px;height:18px;background:#f2f2f2;border:1px solid #e2e2e2;border-radius:2px;box-sizing:border-box"></div>
<span style="left:1585px;top:428px;font-size:9.3px;line-height:9.3px;color:#555;letter-spacing:0.3px;">-5,175</span>
<span style="left:929.4px;top:520px;font-size:9.9px;line-height:9.9px;color:#000;-webkit-text-stroke:0.12px #000;">Billing Sum Amt</span>
<span style="left:1360.5px;top:520px;font-size:9.9px;line-height:9.9px;color:#000;-webkit-text-stroke:0.12px #000;">Billing Revenue</span>
<div style="left:1145px;top:517px;width:199px;height:18px;background:#f2f2f2;border:1px solid #e2e2e2;border-radius:2px;box-sizing:border-box"></div>
<span style="left:1154px;top:522px;font-size:9.3px;line-height:9.3px;color:#555;letter-spacing:0.3px;">512,325</span>
<span style="left:1576px;top:523px;font-size:9.3px;line-height:9.3px;color:#222;letter-spacing:0.3px;">62,325</span>
<div style="left:923px;top:441px;width:872px;height:77px;background:#fff"></div>
<div style="left:922px;top:443px;width:214px;height:69px;background:#f2f2f2"></div>
<div style="left:1352px;top:443px;width:215px;height:69px;background:#f2f2f2"></div>
<div style="left:1136px;top:441px;width:1px;height:77px;background:#dddddd"></div>
<div style="left:1352px;top:441px;width:1px;height:77px;background:#dddddd"></div>
<div style="left:1567px;top:441px;width:1px;height:77px;background:#dddddd"></div>
<div style="left:922px;top:443px;width:861px;height:1px;background:#e3e3e3"></div>
<div style="left:922px;top:466px;width:861px;height:1px;background:#e3e3e3"></div>
<div style="left:922px;top:489px;width:861px;height:1px;background:#e3e3e3"></div>
<div style="left:922px;top:512px;width:861px;height:1px;background:#e3e3e3"></div>
<span style="left:929.4px;top:450px;font-size:9.9px;line-height:9.9px;color:#000;-webkit-text-stroke:0.12px #000;">Coupon Type</span>
<span style="left:1360.5px;top:450px;font-size:9.9px;line-height:9.9px;color:#000;-webkit-text-stroke:0.12px #000;">Coupon Category</span>
<span style="left:929.4px;top:472px;font-size:9.9px;line-height:9.9px;color:#000;-webkit-text-stroke:0.12px #000;">Coupon Name</span>
<span style="left:1360.5px;top:472px;font-size:9.9px;line-height:9.9px;color:#000;-webkit-text-stroke:0.12px #000;">Coupon Amount</span>
<span style="left:929.4px;top:496px;font-size:9.9px;line-height:9.9px;color:#000;-webkit-text-stroke:0.12px #000;">Total Coupon Sum</span>
<span style="left:1360.5px;top:496px;font-size:9.9px;line-height:9.9px;color:#000;-webkit-text-stroke:0.12px #000;">Point Used</span>
<div style="left:918px;top:436px;width:881px;height:87px;border:5px solid #e3191f;box-sizing:border-box"></div>
<div style="left:1739px;top:547px;width:44px;height:18px;background:#868c93;border-radius:2px"></div>
<span style="left:1461px;width:600px;text-align:center;top:551px;font-size:9.2px;line-height:9.2px;color:#fff;-webkit-text-stroke:0.2px #fff;">Save</span>
<span style="left:921.5px;top:567px;font-size:10.6px;line-height:10.6px;color:#000;-webkit-text-stroke:0.12px #000;">Affiliate Commission Rate</span>
<div style="left:922px;top:589px;width:214px;height:23px;background:#f2f2f2"></div>
<div style="left:1352px;top:589px;width:215px;height:23px;background:#f2f2f2"></div>
<div style="left:1136px;top:589px;width:1px;height:23px;background:#dddddd"></div>
<div style="left:1352px;top:589px;width:1px;height:23px;background:#dddddd"></div>
<div style="left:1567px;top:589px;width:1px;height:23px;background:#dddddd"></div>
<div style="left:922px;top:588px;width:861px;height:1px;background:#8c8c8c"></div>
<div style="left:922px;top:612px;width:861px;height:1px;background:#8c8c8c"></div>
<span style="left:929.4px;top:595px;font-size:9.9px;line-height:9.9px;color:#000;-webkit-text-stroke:0.12px #000;">Comm Rate (%)</span>
<span style="left:1360.5px;top:595px;font-size:9.9px;line-height:9.9px;color:#000;-webkit-text-stroke:0.12px #000;">Comm Amount</span>
</body></html>
